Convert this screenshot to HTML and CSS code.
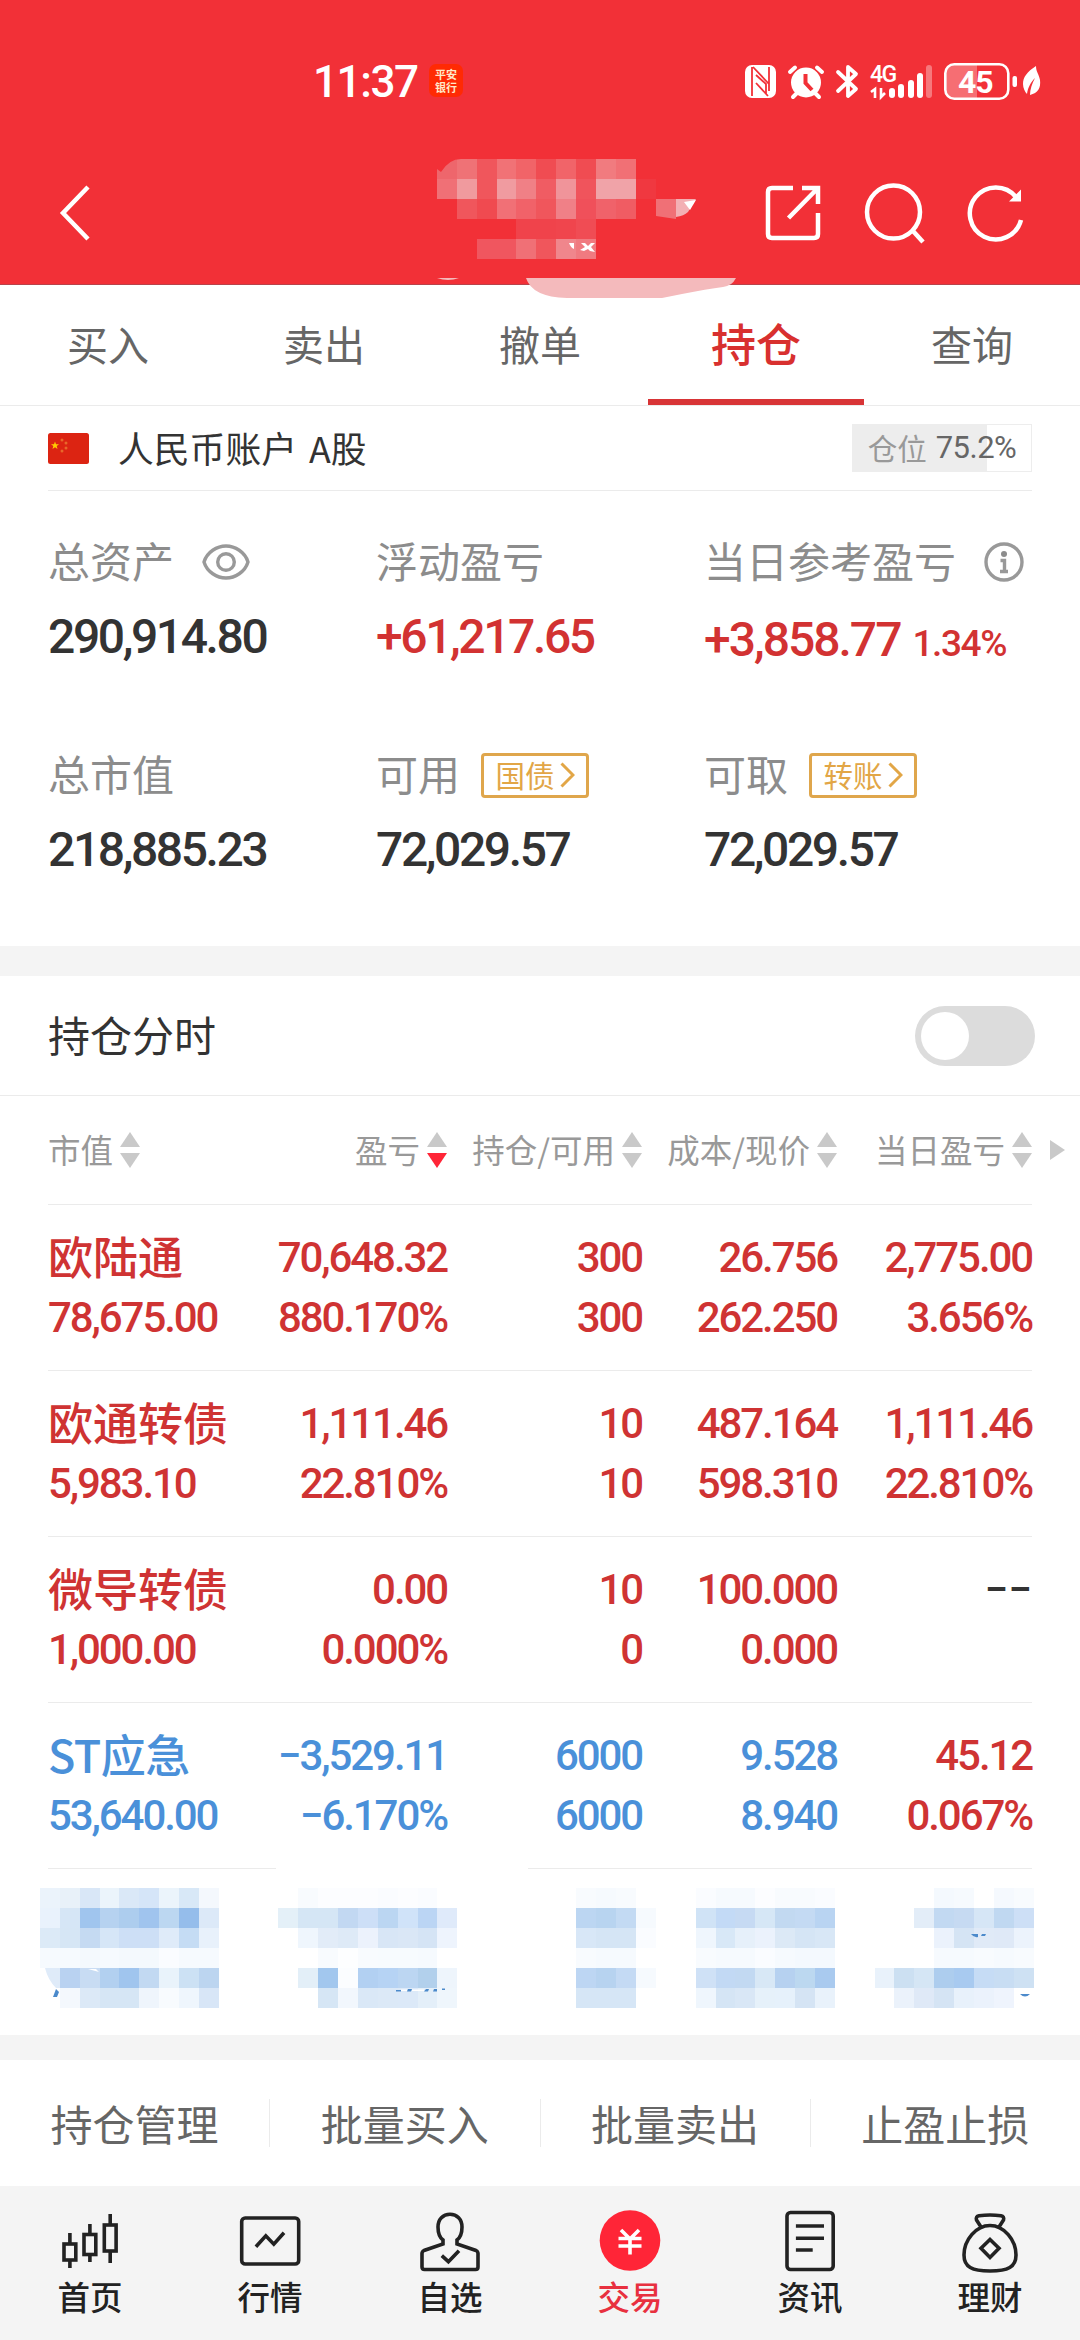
FILE: index.html
```html
<!DOCTYPE html>
<html lang="zh-CN">
<head>
  <meta charset="UTF-8">
  <meta name="viewport" content="width=device-width, initial-scale=1.0">
  <title>持仓</title>
  <link rel="stylesheet" href="styles.css">
</head>
<body>
  <header class="header">
    <div class="status-bar">
      <div class="status-left">
        <span class="time">11:37</span>
        <div class="app-badge"><span>平安</span><span>银行</span></div>
      </div>
      <svg class="status-icons" width="300" height="40" viewBox="742 60 300 40" fill="#fff">
        <!-- nfc -->
        <rect x="744" y="64" width="31" height="33" rx="7"/>
        <path d="M751 66V95M755 74L765 83V93M752 66L768 83M768 66V90M755 82L767 95" stroke="#f23037" stroke-width="1.800" fill="none"/>
        <!-- alarm -->
        <circle cx="805" cy="81.500" r="15"/>
        <path d="M789 71L794 66.500M821 71L816 66.500M796 92L792 96M814 92L818 96" stroke="#fff" stroke-width="4" stroke-linecap="round"/>
        <path d="M804.500 73V82L811 89" stroke="#f23037" stroke-width="4" fill="none"/>
        <!-- bluetooth -->
        <path d="M837 71L855 88L847 95V66L855 73L837 90" stroke="#fff" stroke-width="3.800" fill="none" stroke-linejoin="round" stroke-linecap="round"/>
        <!-- signal -->
        <text x="869" y="81" class="net">4G</text>
        <path d="M870 91L874 88V97M880 87V96L884 92" stroke="#fff" stroke-width="2.600" fill="none"/>
        <rect x="888" y="87" width="6" height="10" rx="3"/>
        <rect x="897" y="83" width="6" height="14" rx="3"/>
        <rect x="907" y="79" width="6" height="18" rx="3"/>
        <rect x="916" y="72" width="6" height="25" rx="3"/>
        <rect x="925" y="64" width="6" height="33" rx="3" opacity=".35"/>
        <!-- battery -->
        <path d="M952 64H976V97H952Q945 97 945 88V73Q945 64 952 64Z" opacity=".3"/>
        <rect x="944.300" y="63.300" width="63" height="34.500" rx="9" fill="none" stroke="#fff" stroke-width="2.600"/>
        <rect x="1011.500" y="75" width="4.500" height="11" rx="2"/>
        <text x="957" y="92" class="level">45</text>
        <!-- leaf -->
        <path d="M1035 65C1026 71 1022 76 1022 83C1022 87 1024 91 1026 93C1027 86 1030 81 1034 77C1031 83 1029 88 1029 94C1037 92 1040 87 1039 79C1038 73 1035 71 1035 65Z"/>
      </svg>
    </div>
    <div class="nav-bar">
      <svg width="36" height="58" viewBox="0 0 36 58" class="line-icon"><path d="M32 3L7 29L32 55"/></svg>
      <div class="nav-actions">
        <svg width="60" height="60" viewBox="0 0 60 60" class="line-icon">
          <path d="M30 5H9Q5 5 5 9V51Q5 55 9 55H51Q55 55 55 51V30M39 5H55V21M55 5L25.500 35"/>
        </svg>
        <svg width="62" height="62" viewBox="0 0 62 62" class="line-icon">
          <circle cx="30.500" cy="30" r="26.500"/><path d="M50 49L60 60"/>
        </svg>
        <svg width="62" height="62" viewBox="0 0 62 62" class="line-icon">
          <path d="M56 38A26 26 0 1 1 51 15"/><path d="M56 7.500V19.500H44Z" fill="#fff" stroke="none"/>
        </svg>
      </div>
    </div>
    <svg class="nav-title" width="300" height="140" viewBox="0 0 300 140" id="navTitle" shape-rendering="crispEdges"></svg>
  </header>

  <nav class="tabs">
    <div class="tab">买入</div>
    <div class="tab">卖出</div>
    <div class="tab">撤单</div>
    <div class="tab active">持仓</div>
    <div class="tab">查询</div>
  </nav>

  <section class="account">
    <svg width="41" height="31" viewBox="0 0 41 31">
      <rect width="41" height="31" rx="2.500" fill="#dc2412"/>
      <path d="M7 8.500L8 11.200H11L8.700 13L9.500 16L7 14.200L4.500 16L5.300 13L3 11.200H6Z" fill="#fc0"/>
      <g fill="#e8672a"><circle cx="14" cy="7" r="1.500"/><circle cx="18" cy="10" r="1.500"/><circle cx="18" cy="15" r="1.500"/><circle cx="14" cy="18" r="1.500"/></g>
    </svg>
    <span class="account-name">人民币账户 A股</span>
    <div class="position">
      <div class="position-fill" style="width: 75.2%"></div>
      <span class="position-label">仓位</span><span class="position-value">75.2%</span>
    </div>
  </section>

  <section class="summary">
    <div class="item">
      <div class="label"><span>总资产</span>
        <svg class="eye" width="48" height="36" viewBox="0 0 48 36"><path d="M2 18C5 8 15 2 24 2S43 8 46 18C43 28 33 34 24 34S5 28 2 18Z"/><circle cx="24" cy="18" r="8.300"/></svg>
      </div>
      <div class="value">290,914.80</div>
    </div>
    <div class="item">
      <div class="label"><span>浮动盈亏</span></div>
      <div class="value red">+61,217.65</div>
    </div>
    <div class="item">
      <div class="label"><span>当日参考盈亏</span>
        <svg class="info" width="40" height="40" viewBox="0 0 40 40"><circle cx="20" cy="20" r="18"/><circle cx="20" cy="12" r="3" class="solid"/><path d="M16.500 18.500H20.500V29M16 29.500H24"/></svg>
      </div>
      <div class="value red today">+3,858.77<span class="rate">1.34%</span></div>
    </div>
    <div class="item">
      <div class="label"><span>总市值</span></div>
      <div class="value">218,885.23</div>
    </div>
    <div class="item">
      <div class="label"><span>可用</span>
        <div class="link"><span>国债</span><svg width="15" height="26" viewBox="0 0 15 26"><path d="M1.500 1.500L13 13L1.500 24.500"/></svg></div>
      </div>
      <div class="value">72,029.57</div>
    </div>
    <div class="item">
      <div class="label"><span>可取</span>
        <div class="link"><span>转账</span><svg width="15" height="26" viewBox="0 0 15 26"><path d="M1.500 1.500L13 13L1.500 24.500"/></svg></div>
      </div>
      <div class="value">72,029.57</div>
    </div>
  </section>

  <section class="chart-toggle">
    <span>持仓分时</span>
    <div class="switch"><div class="knob"></div></div>
  </section>

  <section class="holdings">
    <div class="table-head">
      <div class="th first"><span>市值</span><i class="sort"></i></div>
      <div class="th"><span>盈亏</span><i class="sort desc"></i></div>
      <div class="th"><span>持仓/可用</span><i class="sort"></i></div>
      <div class="th"><span>成本/现价</span><i class="sort"></i></div>
      <div class="th"><span>当日盈亏</span><i class="sort"></i></div>
      <i class="more"></i>
    </div>
    <div class="row">
      <div class="cell first"><b>欧陆通</b><span>78,675.00</span></div>
      <div class="cell"><span>70,648.32</span><span>880.170%</span></div>
      <div class="cell"><span>300</span><span>300</span></div>
      <div class="cell"><span>26.756</span><span>262.250</span></div>
      <div class="cell"><span>2,775.00</span><span>3.656%</span></div>
    </div>
    <div class="row">
      <div class="cell first"><b>欧通转债</b><span>5,983.10</span></div>
      <div class="cell"><span>1,111.46</span><span>22.810%</span></div>
      <div class="cell"><span>10</span><span>10</span></div>
      <div class="cell"><span>487.164</span><span>598.310</span></div>
      <div class="cell"><span>1,111.46</span><span>22.810%</span></div>
    </div>
    <div class="row">
      <div class="cell first"><b>微导转债</b><span>1,000.00</span></div>
      <div class="cell"><span>0.00</span><span>0.000%</span></div>
      <div class="cell"><span>10</span><span>0</span></div>
      <div class="cell"><span>100.000</span><span>0.000</span></div>
      <div class="cell none"><span>−−</span></div>
    </div>
    <div class="row blue">
      <div class="cell first"><b>ST应急</b><span>53,640.00</span></div>
      <div class="cell"><span>−3,529.11</span><span>−6.170%</span></div>
      <div class="cell"><span>6000</span><span>6000</span></div>
      <div class="cell"><span>9.528</span><span>8.940</span></div>
      <div class="cell up"><span>45.12</span><span>0.067%</span></div>
    </div>
    <svg class="hidden-row" width="1080" height="167" viewBox="0 1868 1080 167" id="hiddenRow" shape-rendering="crispEdges"></svg>
  </section>

  <section class="actions">
    <div>持仓管理</div>
    <div>批量买入</div>
    <div>批量卖出</div>
    <div>止盈止损</div>
  </section>

  <footer class="tab-bar">
    <div class="tab-item">
      <svg viewBox="0 0 66 66"><rect x="7" y="37" width="11.800" height="16"/><path d="M12.900 26V36M12.900 54V61"/><rect x="27" y="27.500" width="11.800" height="20"/><path d="M32.900 17V27M32.900 48V55"/><rect x="47.300" y="18" width="11.800" height="26"/><path d="M53.200 7V17M53.200 45V56"/></svg>
      <span>首页</span>
    </div>
    <div class="tab-item">
      <svg viewBox="0 0 66 66"><rect x="4.700" y="11" width="57" height="46" rx="3.500"/><path d="M18.900 39.700L28.800 28.800L36.800 37.200L47 25.700"/></svg>
      <span>行情</span>
    </div>
    <div class="tab-item">
      <svg viewBox="0 0 66 66"><path d="M26 37V33C22 30 21 26 21 20C21 12 26 7.300 33 7.300S45 12 45 20C45 26 44 30 40 33V37L59 43.500Q61 44.500 61 46.500V60Q61 62.500 58.500 62.500H7.500Q5 62.500 5 60V46.500Q5 44.500 7 43.500L26 37V33M24.800 48.700L31.400 54.700L42 43.700"/></svg>
      <span>自选</span>
    </div>
    <div class="tab-item current">
      <svg viewBox="0 0 66 66"><circle cx="33" cy="33.500" r="30.300"/><path d="M24 23L33 32L42 23M21.500 31.500H44.500M21.500 39H44.500M33 32V47.500"/></svg>
      <span>交易</span>
    </div>
    <div class="tab-item">
      <svg viewBox="0 0 66 66"><rect x="10" y="5.500" width="46.200" height="57" rx="3.500"/><path d="M18.900 19H47M18.900 31.300H47M18.900 43H35.700"/></svg>
      <span>资讯</span>
    </div>
    <div class="tab-item">
      <svg viewBox="0 0 66 66"><path d="M24 20L19.500 13Q18.500 9.500 22 8.800Q33 7.200 44 8.800Q47.500 9.500 46.500 13L42 20M33 18.500C47 18.500 59 33 59 48C59 60 51 64 33 64S7 60 7 48C7 33 19 18.500 33 18.500ZM33 32.500L42 41.300L33 50.500L24 41.300Z"/></svg>
      <span>理财</span>
    </div>
  </footer>

  <script src="script.js"></script>
</body>
</html>
```
FILE: styles.css
```css
* {
  box-sizing: border-box;
}
body {
  margin: 0;
  width: 1080px;
  background-color: #fff;
  color: #333;
  font-family: "Noto Sans CJK SC", sans-serif;
}
i {
  font-style: normal;
}
svg {
  display: block;
  flex: none;
}

/* Header */
.header {
  position: relative;
  height: 285px;
  background-color: #f23037;
  border-bottom: 1px solid #b9434a;
}
.status-bar {
  display: flex;
  justify-content: space-between;
  align-items: center;
  height: 142px;
  padding: 19px 37px 0 313px;
}
.status-left {
  display: flex;
  align-items: center;
  gap: 12px;
}
.time {
  color: #fff;
  font: 500 44px/50px Roboto, sans-serif;
  width: 104px;
  padding-top: 2px;
  letter-spacing: -1.4px;
  white-space: nowrap;
}
.app-badge {
  display: flex;
  flex-direction: column;
  align-items: center;
  justify-content: center;
  width: 34px;
  height: 33px;
  border-radius: 7px;
  background-color: #ff2a04;
  color: #ffe9c8;
  font-size: 11px;
  font-weight: bold;
  line-height: 13px;
}
.net {
  font: 500 23px Roboto, sans-serif;
  letter-spacing: -1.5px;
}
.level {
  font: 700 32px Roboto, sans-serif;
  letter-spacing: -1px;
}
.nav-bar {
  display: flex;
  justify-content: space-between;
  align-items: center;
  height: 142px;
  padding: 0 53px 0 56px;
}
.nav-actions {
  display: flex;
  align-items: center;
  gap: 40px;
}
.line-icon {
  fill: none;
  stroke: #fff;
  stroke-width: 4.5;
}
.nav-title {
  position: absolute;
  left: 437px;
  top: 159px;
  z-index: 1;
}

/* Tabs */
.tabs {
  display: flex;
  height: 121px;
  border-bottom: 1px solid #ebebeb;
}
.tab {
  flex: 1;
  display: flex;
  align-items: center;
  justify-content: center;
  font-size: 41px;
  color: #666;
  border-bottom: 6px solid transparent;
  padding-top: 1px;
}
.tab.active {
  font-size: 45px;
  font-weight: 500;
  color: #d8302f;
  border-bottom-color: #d83436;
}

/* Account */
.account {
  display: flex;
  align-items: center;
  height: 85px;
  margin: 0 48px;
  border-bottom: 1px solid #ebebeb;
}
.account-name {
  margin-left: 29px;
  padding-bottom: 2px;
  font-size: 35.8px;
  line-height: 50px;
  word-spacing: 4px;
}
.position {
  position: relative;
  display: flex;
  align-items: center;
  justify-content: center;
  gap: 9px;
  width: 180px;
  height: 48px;
  margin-left: auto;
  border: 1px solid #ededed;
}
.position-fill {
  position: absolute;
  left: 0;
  top: 0;
  height: 100%;
  background-color: #ededed;
}
.position-label,
.position-value {
  position: relative;
  font-size: 29.5px;
  line-height: 46px;
  color: #999;
}
.position-label {
  padding-bottom: 3px;
}
.position-value {
  font-family: Roboto, sans-serif;
  font-size: 31px;
  letter-spacing: -0.5px;
  color: #666;
}

/* Summary */
.summary {
  display: grid;
  grid-template-columns: 328px 328px 328px;
  row-gap: 65px;
  height: 455px;
  padding: 43px 48px 0;
  align-content: start;
}
.label {
  display: flex;
  align-items: center;
  height: 56px;
  font-size: 42px;
  color: #8c8c8c;
  white-space: nowrap;
}
.label > span {
  padding-bottom: 6px;
}
.eye,
.info {
  margin-left: 28px;
  fill: none;
  stroke: #999;
  stroke-width: 3.4;
}
.info .solid {
  fill: #8c8c8c;
  stroke: none;
}
.value {
  height: 92px;
  font: 500 48px/94px Roboto, sans-serif;
  letter-spacing: -2.4px;
  white-space: nowrap;
}
.value.today {
  line-height: 100px;
  letter-spacing: -2px;
}
.rate {
  margin-left: 12px;
  font-size: 37px;
  letter-spacing: -1.4px;
}
.red {
  color: #d23232;
}
.link {
  display: flex;
  align-items: center;
  justify-content: center;
  gap: 5px;
  width: 108px;
  height: 45px;
  margin-left: 21px;
  border: 3px solid #dfa64c;
  border-radius: 4px;
  font-size: 29.5px;
  color: #e2a646;
}
.link span {
  padding-bottom: 3px;
}
.link svg {
  fill: none;
  stroke: #e2a646;
  stroke-width: 3;
}

/* Chart switch */
.chart-toggle {
  display: flex;
  align-items: center;
  justify-content: space-between;
  height: 150px;
  padding: 0 45px 0 48px;
  border-top: 30px solid #f4f4f4;
  border-bottom: 1px solid #ebebeb;
  font-size: 42px;
}
.chart-toggle > span {
  padding-bottom: 4px;
}
.switch {
  width: 120px;
  height: 60px;
  padding: 6px;
  border-radius: 30px;
  background-color: #dcdcdc;
}
.knob {
  width: 48px;
  height: 48px;
  border-radius: 50%;
  background-color: #fff;
}

/* Holdings */
.table-head {
  display: grid;
  grid-template-columns: 204px repeat(4, 195px) 48px;
  align-items: center;
  height: 108px;
  padding-left: 48px;
}
.th {
  display: flex;
  align-items: center;
  justify-content: flex-end;
  gap: 7px;
  font-size: 32.5px;
  color: #999;
  white-space: nowrap;
}
.th span {
  padding-bottom: 3px;
}
.th.first {
  justify-content: flex-start;
}
.sort {
  display: flex;
  flex-direction: column;
  gap: 6px;
}
.sort::before,
.sort::after {
  content: "";
  border: 10.5px solid transparent;
}
.sort::before {
  border-top: 0;
  border-bottom: 15px solid #c9c9c9;
}
.sort::after {
  border-bottom: 0;
  border-top: 15px solid #c9c9c9;
}
.sort.desc::after {
  border-top-color: #ff2537;
}
.more {
  width: 0;
  margin-left: 18px;
  border: 10.5px solid transparent;
  border-left: 15px solid #c9c9c9;
  border-right: 0;
}
.row {
  display: grid;
  grid-template-columns: 204px repeat(4, 195px);
  height: 166px;
  margin: 0 48px;
  padding-top: 23px;
  border-top: 1px solid #ebebeb;
  color: #cf3333;
}
.cell {
  display: flex;
  flex-direction: column;
  align-items: flex-end;
  font: 500 42px/60px Roboto, sans-serif;
  letter-spacing: -2.1px;
  white-space: nowrap;
}
.cell.first {
  align-items: flex-start;
}
.cell b {
  height: 60px;
  font: 500 45px/55px "Noto Sans CJK SC", sans-serif;
  letter-spacing: 0;
}
.row.blue {
  color: #4a90d9;
}
.row.blue b {
  letter-spacing: -0.5px;
}
.row .up {
  color: #cf3333;
}
.row .none {
  color: #333;
  letter-spacing: 0;
}

/* Actions */
.actions {
  display: flex;
  align-items: center;
  height: 151px;
  border-top: 25px solid #f4f4f4;
}
.actions div {
  flex: 1;
  height: 48px;
  line-height: 47px;
  text-align: center;
  font-size: 42px;
  color: #666;
}
.actions div + div {
  border-left: 1px solid #ebebeb;
}

/* Bottom tab bar */
.tab-bar {
  display: flex;
  height: 154px;
  padding-top: 21px;
  background-color: #f4f4f4;
}
.tab-item {
  flex: 1;
  display: flex;
  flex-direction: column;
  align-items: center;
  font-size: 32.5px;
  font-weight: 500;
  line-height: 46px;
  color: #222;
}
.tab-item svg {
  width: 66px;
  height: 66px;
  fill: none;
  stroke: #222;
  stroke-width: 3.6;
}
.tab-item.current {
  color: #e8303f;
}
.tab-item.current svg {
  stroke: #fff;
}
.tab-item.current circle {
  fill: #ff2537;
  stroke: none;
}
```
FILE: script.js
```js
// Masked blocks: each entry is [row, first column, colors...]
const CELL_W = 19.87;
const CELL_H = 20;

const titleCells = [
  [0, 0, 'ee666c', 'ef7276', 'f0565c', 'f17276', 'f16468', 'f04c52', 'f16469', 'f04c52', 'f17b7f', 'f17075'],
  [1, 0, 'f07076', 'f09a9e', 'f0565c', 'f09ba0', 'f08086', 'f05c63', 'f0949a', 'f0545c', 'f0a3a8', 'f0a3a8', 'f03840'],
  [2, 1, 'f0565c', 'f04a50', 'f17076', 'f16269', 'f0565c', 'f08087', 'f0505a', 'f0626a', 'f05c63'],
  [3, 4, 'f0434b', 'f0434b', 'f0454d', 'f04c54'],
  [4, 2, 'f0565f', 'f0565f', 'f07076', 'f0565c', 'f0868c', 'f07a80']
];

const rowCells = [
  [0, 0, 'ebf3fb', 'e8f1f9', 'd9e7f7', 'ebf4fb', 'dae8f7', 'd5e5f8', 'ebf4fb', 'd8e8f7', 'f4f8fd'],
  [1, 0, 'e9f2fc', 'd6e6f6', 'a0c5ee', 'b6d2f0', 'adcdee', 'a0c4ee', 'bcd7f1', '95bdeb', 'dce9f8'],
  [2, 0, 'dceaf7', 'd6e6f5', 'c5daf2', 'd6e6f7', 'cddff6', 'cddff6', 'dfebf9', 'c5dcf4', 'e8f1fb'],
  [3, 0, 'f6fafe', 'f6fafe', 'f4f9fd', 'f6fafe', 'f4f9fd', 'f4f9fd', 'fafcff', 'f6fafe', 'f6fafe'],
  [4, 0, 'dfebf9', 'b9d2f1', 'c8dcf3', 'b2d0f0', 'a0c5ee', 'c2d9f2', 'e9f3fb', 'cce1f4', 'bcd5f0'],
  [5, 1, 'f4f8fd', 'dce9f7', 'd6e6f5', 'd6e6f5', 'eff5fc', 'f8fbfe', 'eff6fd', 'd8e6f7'],
  [0, 13, 'f8fbfe', 'fcfdff', 'fcfdff', 'fcfdff', 'fafcff', 'fcfdff', 'fafcff'],
  [1, 12, 'e4f0f8', 'd5e6f5', 'd5e6f5', 'c2d8f2', 'cddff7', 'bbd6f2', 'd0e3f9', 'bbd5f4', 'dfeafa'],
  [2, 13, 'eff6fd', 'e2ecf8', 'deeaf7', 'ecf2fc', 'd8e6f6', 'dae7f6', 'd5e4f5', 'eef4fd'],
  [3, 14, 'f8fbfe', 'fdfeff', 'f8fbfe', 'f7fbfe', 'f7fbfe', 'f6fafe'],
  [4, 13, 'e3eff8', 'a2c7ee', 'fbfdff', 'b2d0f2', 'b6d3f4', 'bcd6f2', 'b2d0ec', 'eef5fc'],
  [5, 14, 'd6e6f5', 'f2f7fd', 'dae8f7', 'dce9f7', 'dce9f8', 'e4eff9', 'eff6fc'],
  [0, 27, 'f8fbfe', 'f6fafe', 'f8fbfe'],
  [1, 27, 'bcd6f2', 'b8d4f0', 'c3daf3', 'f6fafe'],
  [2, 27, 'd8e7f7', 'd5e5f5', 'd5e5f5', 'fafcff'],
  [3, 27, 'f8fbfe', 'f6fafe', 'f6fafe'],
  [4, 27, 'bdd6f3', 'b7d3f0', 'c4daf4', 'f6fafe'],
  [5, 27, 'd6e6f6', 'd6e6f6', 'd6e6f6'],
  [0, 33, 'fafcff', 'f6fafe', 'f6fafe', 'fcfdff', 'f8fbfe', 'f8fbfe', 'fafcff'],
  [1, 33, 'd0e3f6', 'c3daf6', 'c6daf3', 'd6e7f6', 'c2d9f1', 'c4daf3', 'b9d4f2'],
  [2, 33, 'eff6fd', 'd8e8f7', 'e6f0fa', 'ebf2fc', 'dce9f6', 'd5e5f5', 'd8e7f6'],
  [3, 33, 'f8fbfe', 'f6fafe', 'f6fafe', 'fafcff', 'f6fafe', 'f4f9fe', 'f4f9fe'],
  [4, 33, 'cfe1f6', 'c2d9f4', 'c2d9f2', 'd8e8f6', 'b6d1f0', 'bcd8f0', 'a9caef'],
  [5, 33, 'eff6fd', 'd5e5f5', 'd9e7f6', 'e6f1fa', 'e6f1fb', 'd5e4f4', 'e9f2fb'],
  [0, 45, 'f4f9fe', 'f6fafe', 'ffffff', 'f5f9fe', 'f8fbfe'],
  [1, 44, 'e3edf8', 'c2d9f2', 'c6daf2', 'd6e6f6', 'c0d8f1', 'cddff6'],
  [2, 45, 'ebf2fc', 'd5e4f4', 'e0eaf7', 'dfe9f7', 'ecf3fc'],
  [3, 45, 'f6fafe', 'f6fafe', 'f8fbfe', 'f6fafe', 'f8fbfe'],
  [4, 42, 'e9f2fb', 'cce0f2', 'd5e6f5', 'adcdee', 'a8caf0', 'c6dcf5', 'c8ddf3', 'cee1f3'],
  [5, 43, 'ebf2fb', 'dfe9f7', 'd5e4f4', 'e8f1fb', 'ebf2fc', 'eff4fd']
];

function drawCells(cells, x0, y0) {
  let out = '';
  cells.forEach(([row, col, ...colors]) => {
    colors.forEach((color, i) => {
      const x = Math.round(x0 + (col + i) * CELL_W);
      const next = Math.round(x0 + (col + i + 1) * CELL_W);
      out += `<rect x="${x}" y="${y0 + row * CELL_H}" width="${next - x}" height="${CELL_H}" fill="#${color}"/>`;
    });
  });
  return out;
}

document.getElementById('navTitle').innerHTML = drawCells(titleCells, 0, 0) + `
  <g shape-rendering="auto">
    <path d="M0 0H24Q12 0 4 13L0 10Z" fill="#f23037"/>
    <path d="M219 40H239V60L219 57Z" fill="#f07076"/>
    <path d="M239 40H259L251 53Q247 57 239 58Z" fill="#f3b0b4"/>
    <path d="M247 43L259 41L253 51Z" fill="#fff"/>
    <path d="M132 84H137V90Q134 89 132 84ZM144 84H148L151 87L154 84H158L154 88L158 93L153 92L151 90L147 92L143 91L148 88Z" fill="#fff"/>
    <path d="M0 119H22Q11 123 0 119Z" fill="#f4babc"/>
    <path d="M89 119H299Q295 127 286 128Q270 130 245 135L225 139H130Q95 138 89 119Z" fill="#f4babc"/>
  </g>`;

document.getElementById('hiddenRow').innerHTML = drawCells(rowCells, 40, 1888) + `
  <path d="M48 1868.500H276M528 1868.500H1032" stroke="#ebebeb"/>
  <g shape-rendering="auto" fill="#4c8acb">
    <path d="M40 1968H45Q48 1980 56 1988L40 1988Z" fill="#fff"/>
    <path d="M56 1989L59 1992L57 1997H53Z"/>
    <path d="M396 1990H401V1991.500H396ZM408 1989H412L411 1991.500H407ZM426 1989H429L428 1991.500H424ZM434 1989H437V1991.500H433ZM442 1988.500H445V1990H442Z"/>
    <path d="M401 1989.500H407V1991H401ZM412 1989.500H424V1991H412ZM88 1969H96L99 1972Z" fill="#fff"/>
    <path d="M971 1934H978V1937Q974 1938 971 1934ZM982 1934H986L985 1936H981Z"/>
    <path d="M1020 1994H1030Q1025 1999 1020 1994Z"/>
  </g>`;
```
